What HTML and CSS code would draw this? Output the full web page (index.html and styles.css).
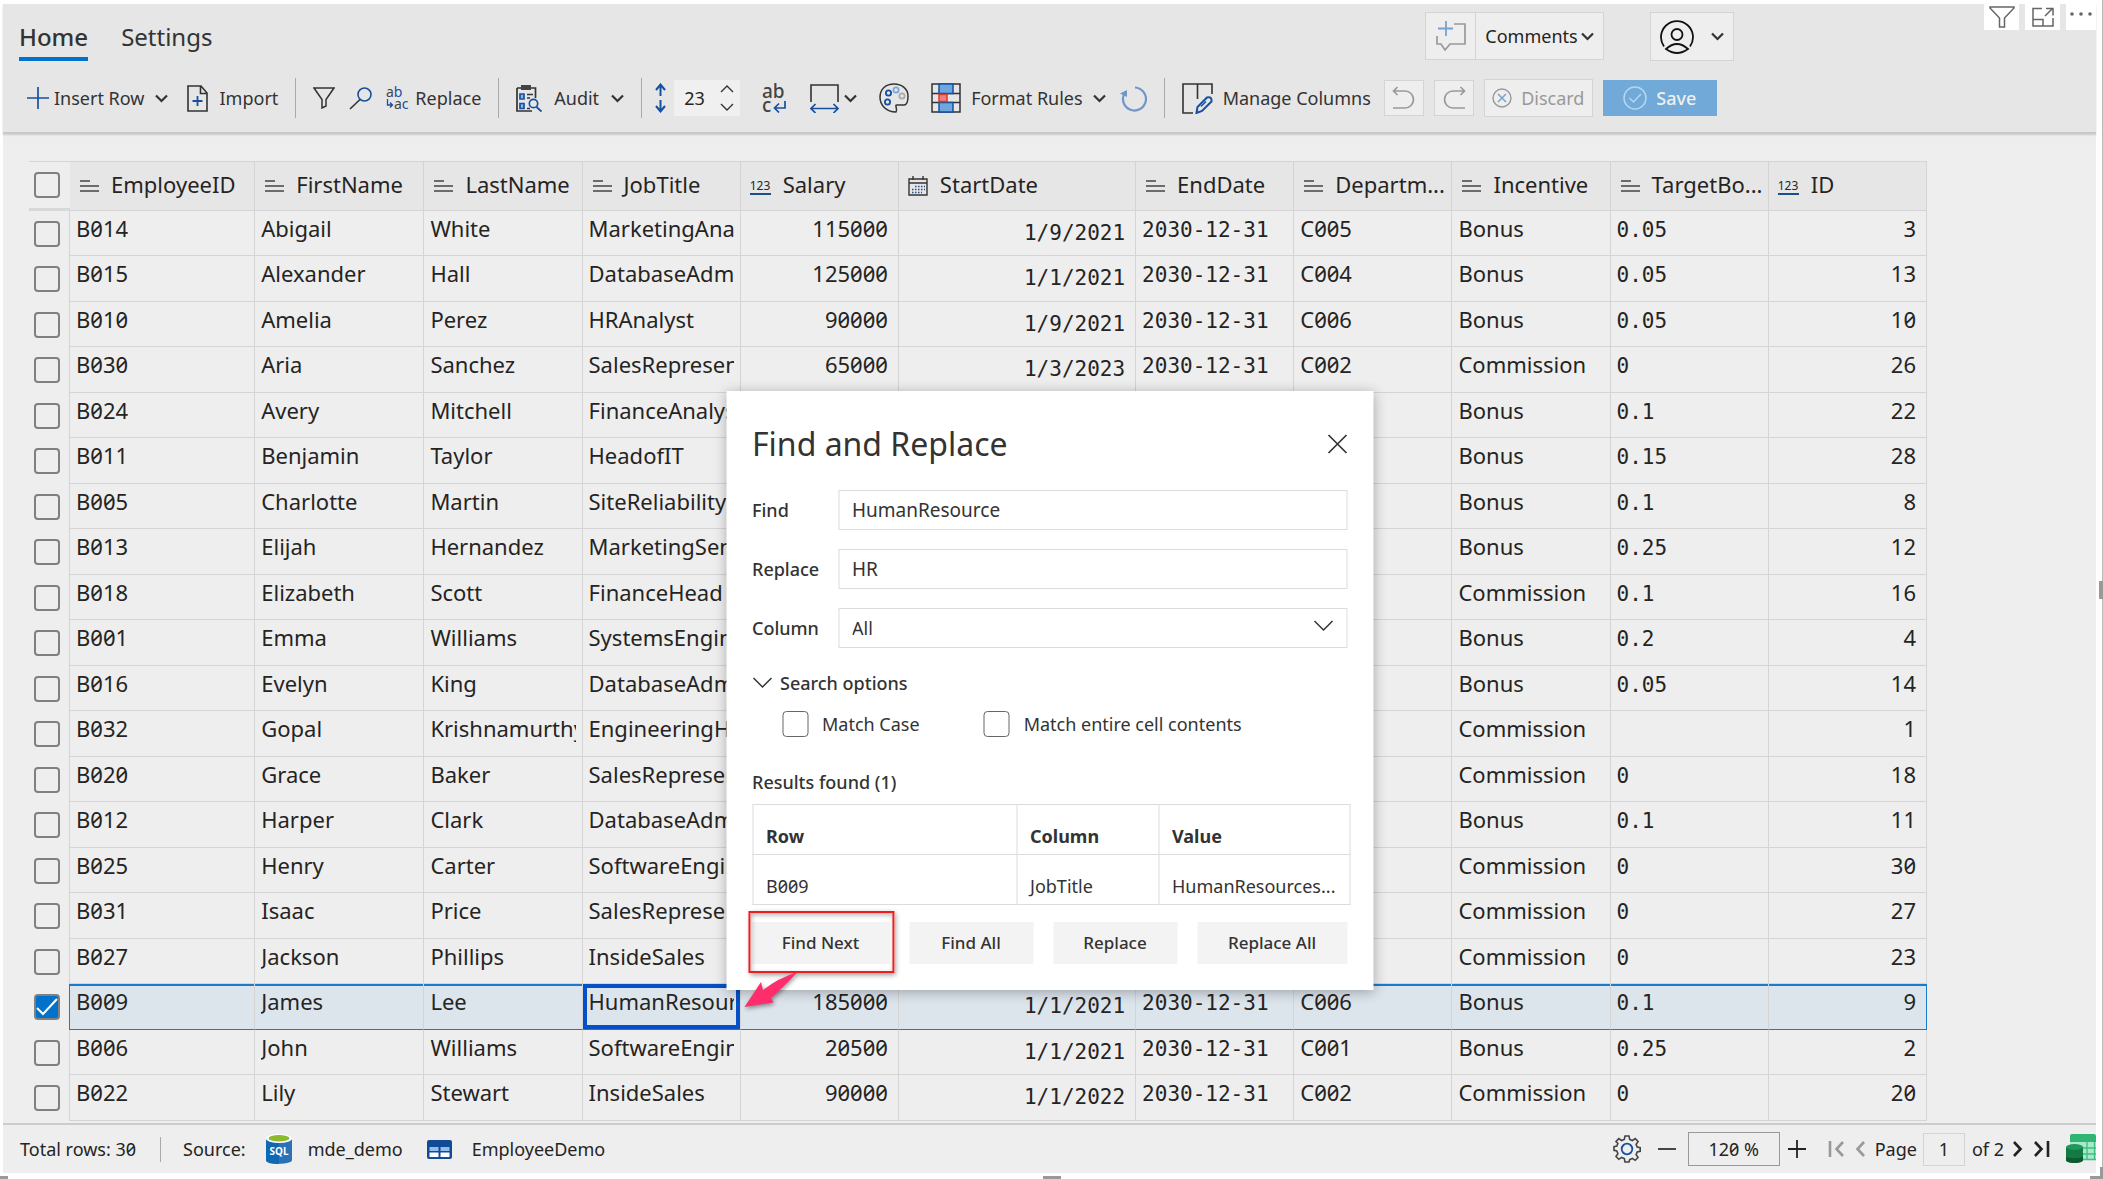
FILE: index.html
```html
<!DOCTYPE html>
<html lang="en">
<head>
  <meta charset="UTF-8" />
  <meta name="viewport" content="width=device-width, initial-scale=1.0" />
  <title>EmployeeDemo</title>
  <link rel="stylesheet" href="styles.css">
</head>

<body>
  <!-- shared icons -->
  <svg class="sprite" aria-hidden="true">
    <symbol id="i-chevron" viewBox="0 0 13 9"><path d="M1 1.5l5.5 5.5L12 1.5" fill="none" stroke="#333" stroke-width="2.2"/></symbol>
    <symbol id="i-thin" viewBox="0 0 20 12"><path d="M1 1l9 9 9-9" fill="none" stroke="#333" stroke-width="1.5"/></symbol>
    <symbol id="i-text" viewBox="0 0 20 14"><path d="M1 2h10M1 7h19M1 12h19" fill="none" stroke="#444" stroke-width="1.5"/></symbol>
    <symbol id="i-date" viewBox="0 0 20 20"><path d="M1 3h18v16H1zM1 7h18M5 0v4M15 0v4" fill="none" stroke="#333" stroke-width="1.4"/><path d="M7 10.5h10M4 13.5h13M4 16.500h10" stroke="#1f4e8c" stroke-width="1.4" stroke-dasharray="1.5 1.5"/></symbol>
  </svg>

  <div class="app">
    <header class="header">
      <div class="top-row">
        <nav class="tabs">
          <a href="#" class="tab active">Home</a>
          <a href="#" class="tab">Settings</a>
        </nav>
        <div class="comments">
          <button class="comment-add" aria-label="Add comment">
            <svg width="30" height="30" viewBox="0 0 30 30" fill="none"><path d="M18 3h11v20H14l-5 6-4-6H1v-8" stroke="#999" stroke-width="1.7"/><path d="M10 0v15M2 7.500h15" stroke="#7b9fd0" stroke-width="1.8"/></svg>
          </button>
          <button class="comment-menu">Comments <svg width="13" height="9"><use href="#i-chevron"/></svg></button>
        </div>
        <button class="user" aria-label="Account">
          <svg width="34" height="34" viewBox="0 0 34 34" fill="none" stroke="#111" stroke-width="1.8"><path d="M4 26.500A16 16 0 1 1 30 26.500"/><circle cx="17" cy="14.500" r="5.500"/><path d="M6 29q11-10 22 0-11 8-22 0z"/></svg>
          <svg width="13" height="9"><use href="#i-chevron"/></svg>
        </button>
        <div class="visual-tools">
          <button aria-label="Filters"><svg width="26" height="22" viewBox="0 0 26 22" fill="none" stroke="#666" stroke-width="1.5"><path d="M1 1h24v1L15.500 12v9h-5v-9L1 2z"/></svg></button>
          <button aria-label="Focus mode"><svg width="22" height="20" viewBox="0 0 22 20" fill="none" stroke="#666" stroke-width="1.500"><path d="M10 1.500H1V19h20v-8M1 12.500h10V19M13 9l7.500-7.500M14 1.500h7v7"/></svg></button>
          <button class="cut" aria-label="More options"><svg width="22" height="6" viewBox="0 0 22 6" fill="#666"><circle cx="2" cy="3" r="1.800"/><circle cx="11" cy="3" r="1.800"/><circle cx="20" cy="3" r="1.800"/></svg></button>
        </div>
      </div>

      <div class="toolbar">
        <div class="group">
          <button class="tool tight">
            <svg width="22" height="22" viewBox="0 0 22 22"><path d="M11 0v22M0 11h22" stroke="#1650a0" stroke-width="1.700"/></svg>
            Insert Row
            <svg class="chev" width="13" height="9"><use href="#i-chevron"/></svg>
          </button>
          <button class="tool">
            <svg width="21" height="27" viewBox="0 0 21 27" fill="none"><path d="M1 1h13l6 7v18H1zM13.500 1v7.500H20" stroke="#333" stroke-width="1.600"/><path d="M10.500 11v10M5.500 16h10" stroke="#1650a0" stroke-width="1.800"/></svg>
            Import
          </button>
        </div>
        <span class="divider"></span>
        <div class="group snug">
          <button class="tool" aria-label="Filter"><svg width="22" height="22" viewBox="0 0 22 22" fill="none" stroke="#333" stroke-width="1.500"><path d="M1 1h20L13 12.500V19l-4 2v-8.500z"/></svg></button>
          <button class="tool" aria-label="Search"><svg width="23" height="23" viewBox="0 0 23 23" fill="none"><circle cx="15.500" cy="7.500" r="6.500" stroke="#1650a0" stroke-width="1.600"/><path d="M11 12.500L1 22" stroke="#333" stroke-width="1.600"/></svg></button>
          <button class="tool tight">
            <svg width="24" height="26" viewBox="0 0 24 26"><text x="0" y="12" font-size="14" fill="#444">a<tspan fill="#1650a0">b</tspan></text><text x="8" y="24" font-size="14" fill="#444">a<tspan fill="#1650a0">c</tspan></text><path d="M1.500 14v6H6M4 17.500L6.500 20 4 22.500" fill="none" stroke="#1650a0" stroke-width="1.300"/></svg>
            Replace
          </button>
        </div>
        <span class="divider"></span>
        <button class="tool">
          <svg width="26" height="27" viewBox="0 0 26 27" fill="none"><path d="M1 3h18.500v10M1 3v23h15" stroke="#333" stroke-width="1.700"/><path d="M5 0h10v5H5z" fill="#444"/><path d="M4 9h4v5H4zM4 18.500h4v5H4z" stroke="#1650a0" stroke-width="1.700" fill="#8db8e4"/><path d="M11 9.500h6M11 13h3M11 23.500h3" stroke="#333" stroke-width="1.500"/><circle cx="17.500" cy="18.500" r="4.200" stroke="#1650a0" stroke-width="1.700" fill="#e6e6e6"/><path d="M20.500 22l5 4.500" stroke="#1650a0" stroke-width="1.800"/></svg>
          Audit
          <svg width="13" height="9"><use href="#i-chevron"/></svg>
        </button>
        <span class="divider close"></span>
        <div class="group wide">
          <div class="stepper">
            <svg width="11" height="30" viewBox="0 0 11 30" fill="none" stroke="#1650a0" stroke-width="2"><path d="M5.500 2v11M1 7l4.500-5.500L10 7M5.500 17v11M1 23l4.500 5.500L10 23"/></svg>
            <div class="stepper-box">
              <input type="text" value="23" aria-label="Row height">
              <div class="stepper-arrows">
                <button aria-label="Increase"><svg width="14" height="8" viewBox="0 0 14 8"><path d="M1 7l6-6 6 6" fill="none" stroke="#333" stroke-width="1.400"/></svg></button>
                <button aria-label="Decrease"><svg width="14" height="8" viewBox="0 0 14 8"><path d="M1 1l6 6 6-6" fill="none" stroke="#333" stroke-width="1.400"/></svg></button>
              </div>
            </div>
          </div>
          <button class="tool" aria-label="Wrap text"><svg width="26" height="30" viewBox="0 0 26 30"><text x="0" y="15" font-size="19" fill="#444" font-weight="500">ab</text><text x="0" y="29" font-size="19" fill="#444" font-weight="500">c</text><path d="M23 18v7H13M17 20.500L12.500 25l4.500 4.500" fill="none" stroke="#1650a0" stroke-width="1.700"/></svg></button>
          <button class="tool tight" aria-label="Column width">
            <svg width="29" height="30" viewBox="0 0 29 30" fill="none"><path d="M1 19V2h27v17" stroke="#333" stroke-width="1.600"/><path d="M1 25.500h27M5.500 21L1 25.500 5.500 30M23.500 21l4.500 4.500-4.500 4.500" stroke="#1650a0" stroke-width="1.700"/></svg>
            <svg width="13" height="9"><use href="#i-chevron"/></svg>
          </button>
          <button class="tool" aria-label="Theme"><svg width="30" height="30" viewBox="0 0 30 30" fill="none" stroke-width="1.800"><path d="M17 29C7 29 1 22 1 14 1 6 7 1 15 1s14 5 14 12c0 5-1 9-4 9h-7c-3 0 1 3-1 7z" stroke="#333" stroke-width="1.500"/><circle cx="9.500" cy="10" r="2.600" stroke="#1650a0"/><circle cx="17" cy="7" r="2.600" stroke="#78a9dc"/><circle cx="23" cy="13" r="2.600" stroke="#aaa"/><circle cx="8.500" cy="19" r="2.600" stroke="#1650a0"/></svg></button>
          <button class="tool rules">
            <svg width="30" height="30" viewBox="0 0 30 30" fill="none"><path d="M1 1h28v28H1zM1 10.500h28M1 19.500h28" stroke="#333" stroke-width="1.500"/><path d="M8 1h14v9.500H8zM8 19.500h14V29H8z" fill="#6ea6de" stroke="#1650a0" stroke-width="1.500"/><path d="M8 11.500h8v7H8z" fill="#f08080" stroke="#d83b2d" stroke-width="1.500"/></svg>
            Format Rules
            <svg width="13" height="9"><use href="#i-chevron"/></svg>
          </button>
          <button class="tool refresh" aria-label="Refresh"><svg width="27" height="27" viewBox="0 0 27 27" fill="none"><path d="M15 2.500a11.500 11.500 0 1 1-10 5" stroke="#6f96c9" stroke-width="2.200"/><path d="M0 8.500L7 5v7z" fill="#6f96c9"/></svg></button>
        </div>
        <span class="divider"></span>
        <div class="group small">
          <button class="tool rules manage">
            <svg width="31" height="31" viewBox="0 0 31 31" fill="none"><path d="M11 30H1V1h29v10M15.500 1v15" stroke="#333" stroke-width="1.600"/><path d="M14.500 30l1-6L25 14.500q5-1.500 4.500 4L20 28z" fill="#e6e6e6" stroke="#1650a0" stroke-width="2"/><path d="M19 23.500l5-5" stroke="#1650a0" stroke-width="1.500"/></svg>
            Manage Columns
          </button>
          <button class="box" aria-label="Undo"><svg width="24" height="24" viewBox="0 0 24 24" fill="none" stroke="#999" stroke-width="1.700"><path d="M5.500 1L1.500 5l4 4M2 5h11a8.500 8.500 0 0 1 0 17H1"/></svg></button>
          <button class="box" aria-label="Redo"><svg width="24" height="24" viewBox="0 0 24 24" fill="none" stroke="#999" stroke-width="1.700"><path d="M18.500 1l4 4-4 4M22 5H11a8.500 8.500 0 0 0 0 17h12"/></svg></button>
          <button class="box discard"><svg width="20" height="20" viewBox="0 0 20 20" fill="none"><circle cx="10" cy="10" r="9" stroke="#999" stroke-width="1.400"/><path d="M6 6l8 8M14 6l-8 8" stroke="#7b9fd0" stroke-width="1.500"/></svg>Discard</button>
          <button class="save"><svg width="24" height="24" viewBox="0 0 24 24" fill="none" stroke="#b5d6f0" stroke-width="1.500"><circle cx="12" cy="12" r="11"/><path d="M6.500 12l4 4 7.500-8"/></svg>Save</button>
        </div>
      </div>
    </header>

    <main class="main">
      <table class="grid">
        <colgroup>
          <col class="w-check"><col class="w-id"><col class="w-first"><col class="w-std"><col class="w-std"><col class="w-std"><col class="w-date"><col class="w-std"><col class="w-std"><col class="w-std"><col class="w-std"><col class="w-std">
        </colgroup>
        <thead>
          <tr>
            <th class="check"><input type="checkbox" aria-label="Select all rows"></th>
            <th><div class="head"><svg width="20" height="14"><use href="#i-text"/></svg><span>EmployeeID</span></div></th>
            <th><div class="head"><svg width="20" height="14"><use href="#i-text"/></svg><span>FirstName</span></div></th>
            <th><div class="head"><svg width="20" height="14"><use href="#i-text"/></svg><span>LastName</span></div></th>
            <th><div class="head"><svg width="20" height="14"><use href="#i-text"/></svg><span>JobTitle</span></div></th>
            <th><div class="head"><i class="num-icon">123</i><span>Salary</span></div></th>
            <th><div class="head"><svg width="20" height="20"><use href="#i-date"/></svg><span>StartDate</span></div></th>
            <th><div class="head"><svg width="20" height="14"><use href="#i-text"/></svg><span>EndDate</span></div></th>
            <th><div class="head"><svg width="20" height="14"><use href="#i-text"/></svg><span>Departm...</span></div></th>
            <th><div class="head"><svg width="20" height="14"><use href="#i-text"/></svg><span>Incentive</span></div></th>
            <th><div class="head"><svg width="20" height="14"><use href="#i-text"/></svg><span>TargetBo...</span></div></th>
            <th><div class="head"><i class="num-icon">123</i><span>ID</span></div></th>
          </tr>
        </thead>
        <tbody id="rows"></tbody>
      </table>
    </main>

    <footer class="footer">
      <span>Total rows: <span class="zero">30</span></span>
      <span class="foot-divider"></span>
      <span>Source:</span>
      <svg class="sql" width="26" height="30" viewBox="0 0 26 30"><path d="M0 4v22c0 5 26 5 26 0V4z" fill="#2a72b8"/><path d="M0 4v22c0 3 6 4 13 4V4z" fill="#0f68b2"/><ellipse cx="13" cy="4.500" rx="13" ry="4.500" fill="#fff"/><ellipse cx="13" cy="4.300" rx="10.500" ry="3.200" fill="#8db92e"/><text x="13" y="21" font-size="10" font-weight="700" text-anchor="middle" fill="#fff">SQL</text></svg>
      <span class="db">mde_demo</span>
      <svg width="25" height="19" viewBox="0 0 25 19"><rect width="25" height="19" rx="2" fill="#134a96"/><path d="M2.500 7h9v4h-9zM13.500 7h9v4h-9z" fill="#8fbfea"/><path d="M2.500 12.500h9V17h-9zM13.500 12.500h9V17h-9z" fill="#fff"/></svg>
      <span>EmployeeDemo</span>

      <div class="paging">
        <button aria-label="Settings"><svg width="28" height="28" viewBox="0 0 28 28" fill="none"><path d="M12 1h4l.7 3.400 2.700 1.100L22.300 3.600l2.800 2.900-2 2.900 1.100 2.600 3 .7v3.600l-3 .7-1.100 2.600 2 2.900-2.900 2.800-2.800-1.900-2.700 1.100L16 27h-4l-.7-3.500-2.700-1.100-2.800 1.900L3 21.500l1.900-2.900L3.800 16 1 15.300v-3.600L3.800 11l1.100-2.600L3 6.500l2.800-2.900 2.800 1.900 2.700-1.100z" stroke="#444" stroke-width="1.600"/><circle cx="14" cy="14" r="5.300" stroke="#1650a0" stroke-width="1.800"/></svg></button>
        <button class="minus" aria-label="Zoom out"><svg width="18" height="18" viewBox="0 0 18 18"><path d="M0 9h18" stroke="#333" stroke-width="1.800"/></svg></button>
        <input class="zoom zero" type="text" value="120 %" aria-label="Zoom">
        <button aria-label="Zoom in"><svg width="18" height="18" viewBox="0 0 18 18"><path d="M0 9h18M9 0v18" stroke="#222" stroke-width="1.800"/></svg></button>
        <button class="first" aria-label="First page"><svg width="17" height="16" viewBox="0 0 17 16"><path d="M2 0v16M15 1L8.500 8l6.500 7" fill="none" stroke="#999" stroke-width="2.600"/></svg></button>
        <button class="prev" aria-label="Previous page"><svg width="10" height="16" viewBox="0 0 10 16"><path d="M9 1L2.500 8 9 15" fill="none" stroke="#999" stroke-width="2.600"/></svg></button>
        <label class="page">Page <input type="text" value="1"></label>
        <span class="of">of 2</span>
        <button class="next" aria-label="Next page"><svg width="10" height="16" viewBox="0 0 10 16"><path d="M1 1l6.500 7L1 15" fill="none" stroke="#222" stroke-width="2.600"/></svg></button>
        <button class="last" aria-label="Last page"><svg width="17" height="16" viewBox="0 0 17 16"><path d="M15 0v16M2 1l6.500 7L2 15" fill="none" stroke="#222" stroke-width="2.600"/></svg></button>
        <svg class="brand" width="30" height="30" viewBox="0 0 30 30"><path d="M6 0h22q2 0 2 2v6H4V2q0-2 2-2z" fill="#2fb573"/><path d="M4 8h26v18H4z" fill="#a9e8c8"/><path d="M4 14h26M4 20h26M21 8v18M28.500 8v18M4 25.500h26" stroke="#3fbf80" stroke-width="1.300"/><path d="M0 13v13c0 4 17 4 17 0V13z" fill="#127a42"/><path d="M0 22v4c0 4 17 4 17 0v-4c0 3-17 3-17 0z" fill="#0d5a30"/><ellipse cx="8.500" cy="13" rx="8.500" ry="3" fill="#21985a"/></svg>
      </div>
    </footer>

    <section class="dialog" role="dialog" aria-labelledby="dialog-title">
      <div class="dialog-head">
        <h1 id="dialog-title">Find and Replace</h1>
        <button aria-label="Close"><svg width="20" height="20" viewBox="0 0 20 20"><path d="M1 1l18 18M19 1L1 19" stroke="#333" stroke-width="1.700"/></svg></button>
      </div>
      <div class="field">
        <label for="find">Find</label>
        <input id="find" type="text" value="HumanResource">
      </div>
      <div class="field">
        <label for="replace">Replace</label>
        <input id="replace" type="text" value="HR">
      </div>
      <div class="field">
        <label for="column">Column</label>
        <div class="select">
          <select id="column"><option>All</option></select>
          <svg width="20" height="12"><use href="#i-thin"/></svg>
        </div>
      </div>
      <button class="options-toggle"><svg width="20" height="12"><use href="#i-thin"/></svg>Search options</button>
      <div class="options">
        <label><input type="checkbox">Match Case</label>
        <label><input type="checkbox">Match entire cell contents</label>
      </div>
      <h2>Results found (1)</h2>
      <table class="results">
        <tr><th>Row</th><th>Column</th><th>Value</th></tr>
        <tr><td class="zero">B009</td><td>JobTitle</td><td>HumanResources...</td></tr>
      </table>
      <div class="actions">
        <button class="find-next">Find Next</button>
        <button class="find-all">Find All</button>
        <button class="find-all">Replace</button>
        <button class="replace-all">Replace All</button>
      </div>
      <div class="callout"></div>
      <svg class="arrow" width="60" height="42" viewBox="0 0 60 42"><path d="M2 37L18.500 12l2 8Q36 8 55 2 45 13 28.500 28l2.500 4.500z" fill="#ff2d6c"/></svg>
    </section>
  </div>

  <span class="handle bottom-left"></span>
  <span class="handle bottom"></span>
  <span class="handle right"></span>
  <span class="handle bottom-right"></span>

  <script src="script.js"></script>
</body>
</html>
```

FILE: styles.css
```css
* {
  box-sizing: border-box;
}
body {
  margin: 0;
  height: 100vh;
  padding: 4px 6px 6px 3px;
  border-right: 1px solid #bbb;
  background: #fff;
  color: #252423;
  font-family: "Noto Sans", sans-serif;
  font-size: 18px;
  line-height: 24px;
}
button, input, select {
  font: inherit;
  color: inherit;
}
button {
  display: flex;
  align-items: center;
  justify-content: center;
  padding: 0;
  border: none;
  background: none;
  white-space: nowrap;
  cursor: pointer;
}
svg {
  flex: none;
  display: block;
}
svg text {
  font-family: "Noto Sans", sans-serif;
}
.sprite {
  position: absolute;
  width: 0;
  height: 0;
}
.zero {
  font-feature-settings: "zero";
}
.app {
  position: relative;
  display: flex;
  flex-direction: column;
  height: 100%;
  background: #eee;
}

/* header */
.header {
  background: #e6e6e6;
  border-bottom: 2px solid #c8c8c8;
  box-shadow: 0 1px 2px rgba(0, 0, 0, 0.15);
}
.top-row {
  display: flex;
  align-items: flex-start;
  height: 60px;
}
.tabs {
  display: flex;
  gap: 33px;
  padding: 17px 0 0 16px;
}
.tab {
  height: 40px;
  color: #333;
  font-size: 24px;
  line-height: 32px;
  text-decoration: none;
}
.tab.active {
  font-weight: 500;
  border-bottom: 4px solid #0072c9;
}
.comments {
  display: flex;
  margin: 8px 46px 0 auto;
  height: 48px;
  background: #eee;
  border: 1px solid #d4d4d4;
}
.comment-add {
  width: 50px;
  border-right: 1px solid #d4d4d4;
}
.comment-menu {
  width: 127px;
  gap: 3px;
}
.user {
  width: 84px;
  height: 49px;
  margin: 8px 250px 0 0;
  gap: 17px;
  background: #eee;
  border: 1px solid #d4d4d4;
}
.visual-tools {
  display: flex;
  gap: 6px;
}
.visual-tools button {
  width: 35px;
  height: 26px;
  background: #fff;
}
.visual-tools .cut {
  width: 30px;
  height: 26px;
  padding-bottom: 6px;
}
.toolbar {
  display: flex;
  align-items: center;
  height: 68px;
  padding-left: 24px;
}
.group {
  display: flex;
  align-items: center;
  gap: 19px;
}
.group.snug {
  gap: 14px;
}
.group.wide {
  gap: 22px;
}
.group.small {
  gap: 10px;
}
.tool {
  gap: 12px;
  color: #333;
}
.tool.tight {
  gap: 5px;
}
.tool.rules {
  gap: 10px;
}
.tool .chev {
  margin-left: 5px;
}
.tool.refresh {
  margin-left: -8px;
}
.tool.manage {
  margin-right: 3px;
}
.divider {
  width: 1px;
  height: 40px;
  margin: 0 17px;
  background: #aaa;
}
.divider.close {
  margin-right: 13px;
}
.stepper {
  display: flex;
  align-items: center;
  gap: 8px;
}
.stepper-box {
  display: flex;
  align-items: center;
  width: 66px;
  height: 36px;
  background: #f0f0f0;
}
.stepper-box input {
  width: 46px;
  padding: 0 0 0 10px;
  border: none;
  background: none;
}
.stepper-arrows {
  display: flex;
  flex-direction: column;
  gap: 10px;
}
.box {
  width: 40px;
  height: 36px;
  background: #eee;
  border: 1px solid #d4d4d4;
}
.box.discard {
  width: 109px;
  height: 38px;
  gap: 9px;
  color: #999;
}
.save {
  width: 114px;
  height: 36px;
  gap: 9px;
  background: #71a9d8;
  color: #f0f0f0;
  font-weight: 500;
}

/* data grid */
.main {
  flex: 1;
  min-height: 0;
  padding: 27px 26px 0;
  overflow: hidden;
}
.grid {
  width: 1898px;
  table-layout: fixed;
  border-collapse: separate;
  border-spacing: 0;
  font-size: 22px;
  line-height: 30px;
}
.w-check { width: 41px; }
.w-id { width: 185px; }
.w-first { width: 169px; }
.w-std { width: 158px; }
.w-date { width: 237px; }
.grid th {
  height: 50px;
  padding: 0 0 0 9px;
  background: #e6e6e6;
  border: 1px solid #d4d4d4;
  border-width: 1px 1px 1px 0;
  font-weight: 400;
  text-align: left;
}
.head {
  display: flex;
  align-items: center;
  gap: 12px;
  height: 46px;
  white-space: nowrap;
}
.head span {
  padding-bottom: 5px;
}
.num-icon {
  width: 21px;
  border-bottom: 2px solid #1f4e8c;
  font-size: 12px;
  font-style: normal;
  line-height: 15px;
}
.grid td {
  height: 45px;
  padding: 2px 6px 0 6px;
  border: 1px solid #d4d4d4;
  border-width: 0 1px 1px 0;
  vertical-align: top;
}
.grid tr:nth-child(even) td {
  height: 46px;
}
.grid td div {
  overflow: hidden;
  white-space: nowrap;
}
.grid td.num {
  padding-right: 10px;
  text-align: right;
}
.grid td.fixed {
  padding-top: 4px;
  font-family: "DejaVu Sans Mono", monospace;
  font-size: 21px;
}
.grid td.start {
  padding-top: 7px;
}
.grid .check {
  padding: 0 0 0 5px;
  vertical-align: middle;
}
.grid td.check {
  border-bottom: none;
}
.grid th.check {
  background: #eee;
  border-bottom: 3px solid #d8d8d8;
  border-right: none;
}
input[type="checkbox"] {
  appearance: none;
  display: block;
  flex: none;
  width: 26px;
  height: 26px;
  margin: 0;
  border: 2px solid #808080;
  border-radius: 4px;
}
input[type="checkbox"]:checked {
  background: #0072c9 url("data:image/svg+xml,%3Csvg xmlns='http://www.w3.org/2000/svg' viewBox='0 0 22 22'%3E%3Cpath d='M1 12l6 6L21 3' fill='none' stroke='%23fff' stroke-width='2'/%3E%3C/svg%3E") center / 22px 22px no-repeat;
}
.grid tr.selected td:not(.check) {
  background: #dce4ec;
  border-bottom-color: #1a7acb;
  box-shadow: inset 0 2px #1a7acb;
}
.grid tr.selected td:last-child {
  border-right-color: #1a7acb;
}
.grid tr.selected td.check {
  border-right-color: #1a7acb;
}
.grid tr.selected td.current {
  box-shadow: inset 0 0 0 4px #0550c8;
}

/* footer */
.footer {
  display: flex;
  align-items: center;
  height: 50px;
  padding-left: 17px;
  background: #eee;
  border-top: 2px solid #ccc;
}
.foot-divider {
  width: 1px;
  height: 25px;
  margin: 0 22px 0 24px;
  background: #aaa;
}
.sql {
  margin: 0 16px 0 20px;
}
.db {
  margin-right: 24px;
}
.db + svg {
  margin-right: 20px;
}
.paging {
  display: flex;
  align-items: center;
  margin-left: auto;
}
.minus {
  margin: 0 12px 0 17px;
}
.zoom {
  width: 92px;
  height: 34px;
  margin-right: 8px;
  border: 1px solid #999;
  background: none;
  text-align: center;
}
.first {
  margin: 0 10px 0 22px;
}
.page {
  display: flex;
  align-items: center;
  gap: 6px;
  margin-left: 10px;
}
.page input {
  width: 42px;
  height: 33px;
  border: 1px solid #d4d4d4;
  background: none;
  text-align: center;
}
.of {
  margin: 0 9px 0 7px;
}
.last {
  margin: 0 16px 0 10px;
}

/* find and replace */
.dialog {
  position: absolute;
  top: 387px;
  left: 50%;
  width: 647px;
  padding: 32px 26px 26px;
  transform: translateX(-50%);
  background: #fff;
  box-shadow: 0 2px 12px rgba(0, 0, 0, 0.3);
  color: #333;
}
.dialog-head {
  display: flex;
  align-items: center;
  justify-content: space-between;
  height: 42px;
  margin-bottom: 25px;
}
.dialog h1 {
  margin: 0;
  font-size: 32px;
  font-weight: 400;
}
.dialog h2 {
  margin: 0 0 10px;
  font-size: 18px;
  font-weight: 500;
}
.field {
  display: flex;
  align-items: center;
  height: 40px;
  margin-bottom: 19px;
}
.field label {
  width: 86px;
  font-weight: 500;
}
.field input,
.field select {
  flex: 1;
  width: 100%;
  height: 40px;
  padding: 0 13px;
  border: 1px solid #dcdcdc;
  border-radius: 0;
  background: #fff;
  font-size: 19px;
}
.select {
  position: relative;
  flex: 1;
}
.select select {
  display: block;
  appearance: none;
  font-size: 18px;
}
.select svg {
  position: absolute;
  top: 12px;
  right: 14px;
}
.options-toggle {
  gap: 8px;
  margin: 23px 0 16px;
  font-weight: 500;
}
.options {
  display: flex;
  gap: 64px;
  margin: 0 0 33px 30px;
}
.options label {
  display: flex;
  align-items: center;
  gap: 14px;
}
.options input[type="checkbox"] {
  border: 1px solid #666;
}
.results {
  width: 598px;
  margin-bottom: 17px;
  table-layout: fixed;
  border-collapse: collapse;
}
.results th,
.results td {
  height: 50px;
  padding: 12px 13px 0;
  border: 1px solid #dcdcdc;
  text-align: left;
}
.results th:nth-child(1) { width: 264px; }
.results th:nth-child(2) { width: 142px; }
.actions {
  display: flex;
  justify-content: space-between;
}
.actions button {
  height: 42px;
  background: #f3f3f3;
  font-size: 17px;
  font-weight: 500;
}
.find-next { width: 137px; }
.find-all { width: 124px; }
.replace-all { width: 150px; }
.callout {
  position: absolute;
  left: 22px;
  bottom: 17px;
  width: 146px;
  height: 62px;
  border: 2px solid #ee1c1c;
  box-shadow: 1px 2px 5px rgba(0, 0, 0, 0.4), inset 1px 2px 5px rgba(0, 0, 0, 0.3);
}
.arrow {
  position: absolute;
  left: 16px;
  bottom: -22px;
  filter: drop-shadow(1px 2px 2px rgba(0, 0, 0, 0.4));
}

/* resize handles of the visual frame */
.handle {
  position: fixed;
  background: #999;
}
.bottom-left {
  left: 0;
  bottom: 0;
  width: 8px;
  height: 3px;
}
.bottom {
  left: 50%;
  bottom: 0;
  width: 18px;
  height: 3px;
  transform: translateX(-50%);
}
.right {
  right: 0;
  top: 50%;
  width: 4px;
  height: 18px;
  transform: translateY(-50%);
}
.bottom-right {
  right: 0;
  bottom: 0;
  width: 13px;
  height: 12px;
  background: none;
  border: solid #999;
  border-width: 0 3px 3px 0;
}
```

FILE: script.js
```js
const employees = [
  ["B014", "Abigail", "White", "MarketingAnalyst", "115000", "1/9/2021", "2030-12-31", "C005", "Bonus", "0.05", "3"],
  ["B015", "Alexander", "Hall", "DatabaseAdministrator", "125000", "1/1/2021", "2030-12-31", "C004", "Bonus", "0.05", "13"],
  ["B010", "Amelia", "Perez", "HRAnalyst", "90000", "1/9/2021", "2030-12-31", "C006", "Bonus", "0.05", "10"],
  ["B030", "Aria", "Sanchez", "SalesRepresentative", "65000", "1/3/2023", "2030-12-31", "C002", "Commission", "0", "26"],
  ["B024", "Avery", "Mitchell", "FinanceAnalyst", "", "", "", "", "Bonus", "0.1", "22"],
  ["B011", "Benjamin", "Taylor", "HeadofIT", "", "", "", "", "Bonus", "0.15", "28"],
  ["B005", "Charlotte", "Martin", "SiteReliabilityEngineer", "", "", "", "", "Bonus", "0.1", "8"],
  ["B013", "Elijah", "Hernandez", "MarketingSenior", "", "", "", "", "Bonus", "0.25", "12"],
  ["B018", "Elizabeth", "Scott", "FinanceHead", "", "", "", "", "Commission", "0.1", "16"],
  ["B001", "Emma", "Williams", "SystemsEngineer", "", "", "", "", "Bonus", "0.2", "4"],
  ["B016", "Evelyn", "King", "DatabaseAdministrator", "", "", "", "", "Bonus", "0.05", "14"],
  ["B032", "Gopal", "Krishnamurthy", "EngineeringHead", "", "", "", "", "Commission", "", "1"],
  ["B020", "Grace", "Baker", "SalesRepresentative", "", "", "", "", "Commission", "0", "18"],
  ["B012", "Harper", "Clark", "DatabaseAdministrator", "", "", "", "", "Bonus", "0.1", "11"],
  ["B025", "Henry", "Carter", "SoftwareEngineer", "", "", "", "", "Commission", "0", "30"],
  ["B031", "Isaac", "Price", "SalesRepresentative", "", "", "", "", "Commission", "0", "27"],
  ["B027", "Jackson", "Phillips", "InsideSales", "", "", "", "", "Commission", "0", "23"],
  ["B009", "James", "Lee", "HumanResourcesHead", "185000", "1/1/2021", "2030-12-31", "C006", "Bonus", "0.1", "9"],
  ["B006", "John", "Williams", "SoftwareEngineer", "20500", "1/1/2021", "2030-12-31", "C001", "Bonus", "0.25", "2"],
  ["B022", "Lily", "Stewart", "InsideSales", "90000", "1/1/2022", "2030-12-31", "C002", "Commission", "0", "20"]
];
const classes = ["zero", "", "", "", "num zero", "num start fixed", "fixed", "zero", "", "fixed", "num zero"];
const selectedId = "B009";

const body = document.getElementById("rows");
employees.forEach(row => {
  const selected = row[0] === selectedId;
  const tr = document.createElement("tr");
  if (selected) tr.className = "selected";
  const check = `<td class="check"><input type="checkbox" aria-label="Select ${row[0]}"${selected ? " checked" : ""}></td>`;
  tr.innerHTML = check + row.map((value, i) => {
    const current = selected && i === 3 ? " current" : "";
    return `<td class="${classes[i]}${current}"><div>${value}</div></td>`;
  }).join("");
  body.appendChild(tr);
});
```
